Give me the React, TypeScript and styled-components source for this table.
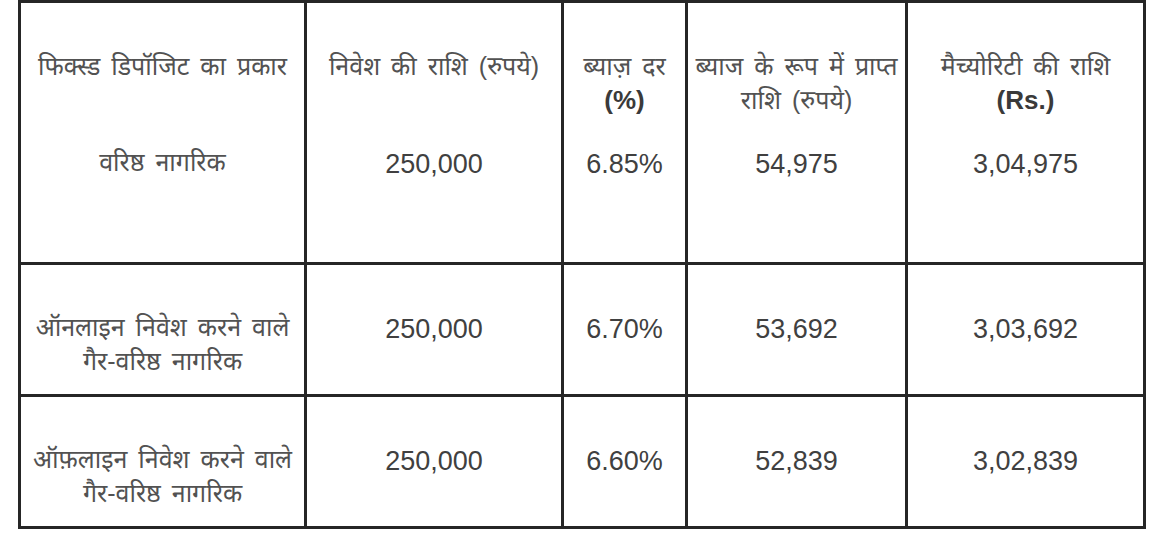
import React from 'react';
import styled, { createGlobalStyle } from 'styled-components';

const GlobalStyle = createGlobalStyle`
  * { box-sizing: border-box; }
  html, body {
    margin: 0;
    padding: 0;
    background: #ffffff;
  }
  body {
    font-family: "Liberation Sans", "Noto Sans", sans-serif;
    color: #404040;
  }
`;

interface Row {
  kind: string[];
  amount: string;
  rate: string;
  interest: string;
  maturity: string;
}

const rows: Row[] = [
  { kind: ['वरिष्ठ नागरिक'], amount: '250,000', rate: '6.85%', interest: '54,975', maturity: '3,04,975' },
  { kind: ['ऑनलाइन निवेश करने वाले', 'गैर-वरिष्ठ नागरिक'], amount: '250,000', rate: '6.70%', interest: '53,692', maturity: '3,03,692' },
  { kind: ['ऑफ़लाइन निवेश करने वाले', 'गैर-वरिष्ठ नागरिक'], amount: '250,000', rate: '6.60%', interest: '52,839', maturity: '3,02,839' },
];

const colWidths = [286, 257, 124, 220, 238];

export default function App() {
  return (
    <>
      <GlobalStyle />
      <Page>
        <Table>
          <colgroup>
            {colWidths.map((w, i) => (
              <col key={i} style={{ width: w }} />
            ))}
          </colgroup>
          <thead>
            <tr>
              <HeadCell>फिक्स्ड डिपॉजिट का प्रकार</HeadCell>
              <HeadCell>निवेश की राशि (रुपये)</HeadCell>
              <HeadCell>
                ब्याज़ दर
                <Unit>(%)</Unit>
              </HeadCell>
              <HeadCell>
                ब्याज के रूप में प्राप्त
                <br />
                राशि (रुपये)
              </HeadCell>
              <HeadCell>
                मैच्योरिटी की राशि
                <Unit>(Rs.)</Unit>
              </HeadCell>
            </tr>
          </thead>
          <tbody>
            {rows.map((r, i) => (
              <BodyRow key={i} first={i === 0}>
                <LabelCell first={i === 0}>
                  {r.kind.map((line, j) => (
                    <Line key={j}>{line}</Line>
                  ))}
                </LabelCell>
                <NumCell first={i === 0}>{r.amount}</NumCell>
                <NumCell first={i === 0}>{r.rate}</NumCell>
                <NumCell first={i === 0}>{r.interest}</NumCell>
                <NumCell first={i === 0}>{r.maturity}</NumCell>
              </BodyRow>
            ))}
          </tbody>
        </Table>
      </Page>
    </>
  );
}

const Page = styled.div`
  padding: 0 0 0 18px;
  width: 1165px;
  height: 541px;
  background: #ffffff;
`;

const Table = styled.table`
  border-collapse: separate;
  border-spacing: 0;
  table-layout: fixed;
  width: 1128px;
  border-top: 3px solid #262626;
  border-left: 3px solid #262626;
`;

const HeadCell = styled.th`
  height: 122px;
  padding: 46px 4px 0;
  vertical-align: top;
  text-align: center;
  font-weight: 400;
  font-size: 25px;
  line-height: 34px;
  word-spacing: 4px;
  color: #525252;
  border-right: 3px solid #262626;
`;

const Unit = styled.span`
  display: block;
  font-family: "Liberation Sans", Arial, sans-serif;
  font-weight: 700;
  font-size: 26px;
  line-height: 34px;
  word-spacing: 0;
  color: #3a3a3a;
`;

const BodyRow = styled.tr<{ first: boolean }>`
  height: ${({ first }) => (first ? 140 : 132)}px;
`;

const BaseCell = styled.td<{ first: boolean }>`
  text-align: center;
  vertical-align: ${({ first }) => (first ? 'top' : 'middle')};
  padding: ${({ first }) => (first ? '22px 4px 0' : '0 4px')};
  border-right: 3px solid #262626;
  border-bottom: 3px solid #262626;
`;

const LabelCell = styled(BaseCell)`
  padding-top: ${({ first }) => (first ? 20 : 28)}px;
  font-size: 25px;
  line-height: 34px;
  word-spacing: 4px;
  color: #525252;
`;

const Line = styled.div``;

const NumCell = styled(BaseCell)`
  font-family: "Liberation Sans", Arial, sans-serif;
  font-size: 27px;
  line-height: 35px;
  color: #404040;
`;
